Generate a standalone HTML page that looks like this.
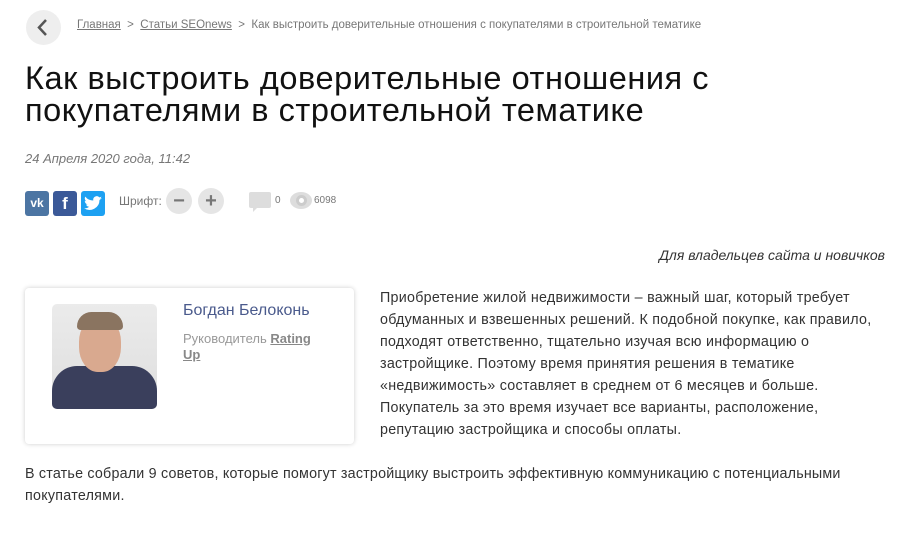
<!DOCTYPE html>
<html><head><meta charset="utf-8"><style>
*{margin:0;padding:0;box-sizing:border-box}
body{width:910px;height:540px;background:#fff;font-family:"Liberation Sans",sans-serif;position:relative;overflow:hidden;color:#222}
.a{position:absolute;white-space:nowrap}
.back{left:26px;top:10px;width:35px;height:35px;border-radius:50%;background:#eee}
.bc{top:19px;font-size:11.5px;color:#777}
.bc u{color:#777}
h1{position:absolute;left:25px;top:62px;font-size:32.5px;font-weight:normal;line-height:32px;color:#111;letter-spacing:0.55px;white-space:nowrap}
.date{left:25px;top:151px;font-size:13px;font-style:italic;color:#777}
.sq{top:191px;width:24px;height:25px;border-radius:3px;color:#fff;font-weight:bold;text-align:center;line-height:25px;font-size:14px}
.circ{top:188px;width:26px;height:26px;border-radius:50%;background:#e5e5e5;color:#777;text-align:center;line-height:26px;font-size:20px;font-weight:bold}
.small{font-size:10px;color:#777}
.p{font-size:14.3px;color:#333;left:380px;letter-spacing:0.26px}
.card{left:25px;top:288px;width:329px;height:156px;border-radius:4px;box-shadow:0 0 5px rgba(0,0,0,.2);background:#fff}
</style></head><body>
<div class="a back"><svg width="35" height="35"><path d="M20 10 L13 17.5 L20 25" stroke="#555" stroke-width="2.5" fill="none"/></svg></div>
<div class="a bc" style="left:77px"><u>Главная</u> &nbsp;&gt;&nbsp; <u>Статьи SEOnews</u> &nbsp;&gt;&nbsp; Как выстроить доверительные отношения с покупателями в строительной тематике</div>
<h1>Как выстроить доверительные отношения с<br>покупателями в строительной тематике</h1>
<div class="a date">24 Апреля 2020 года, 11:42</div>
<div class="a sq" style="left:25px;background:#4c75a3;font-size:12px">vk</div>
<div class="a sq" style="left:53px;background:#3b5998;font-size:17px">f</div>
<div class="a sq" style="left:81px;background:#1da1f2"><svg width="18" height="15" style="margin-top:5px"><path d="M18 2 q-1 .5-2 .6 1-.7 1.5-2-1 .6-2.2.8A3.5 3.5 0 0 0 9.3 4.5 10 10 0 0 1 1.3.6a3.5 3.5 0 0 0 1 4.7 3.5 3.5 0 0 1-1.5-.4 3.5 3.5 0 0 0 2.8 3.4 3.5 3.5 0 0 1-1.6.1 3.5 3.5 0 0 0 3.3 2.4A7 7 0 0 1 0 12.3 10 10 0 0 0 15.5 4Q17 3 18 2z" fill="#fff"/></svg></div>
<div class="a" style="left:119px;top:194px;font-size:12px;color:#777">Шрифт:</div>
<div class="a circ" style="left:166px">−</div>
<div class="a circ" style="left:198px">+</div>
<div class="a" style="left:249px;top:192px;width:22px;height:16px;background:#ddd;border-radius:2px"></div>
<div class="a" style="left:253px;top:207px;width:0;height:0;border-left:5px solid #ddd;border-bottom:5px solid transparent"></div>
<div class="a small" style="left:275px;top:195px">0</div>
<div class="a" style="left:290px;top:192px;width:22px;height:17px;border-radius:50%;background:#ddd"></div>
<div class="a" style="left:296px;top:195px;width:11px;height:11px;border-radius:50%;background:#fff;border:3px solid #ccc"></div>
<div class="a small" style="left:314px;top:195px">6098</div>
<div class="a" style="right:25px;top:247px;font-size:14px;font-style:italic;color:#333">Для владельцев сайта и новичков</div>
<div class="a card"></div>
<div class="a" style="left:52px;top:304px;width:105px;height:105px;border-radius:5px;overflow:hidden;background:linear-gradient(#ebebeb,#dedede)">
<div style="position:absolute;left:0;top:62px;width:105px;height:50px;background:#3a3f5c;border-radius:25px 25px 0 0"></div>
<div style="position:absolute;left:27px;top:13px;width:42px;height:55px;border-radius:45%;background:#d9a98f"></div>
<div style="position:absolute;left:25px;top:8px;width:46px;height:18px;border-radius:20px 20px 5px 5px;background:#8a7460"></div>
</div>
<div class="a" style="left:183px;top:302px;font-size:16px;color:#4a5a8c">Богдан Белоконь</div>
<div class="a" style="left:183px;top:331px;font-size:13px;color:#999;line-height:16px">Руководитель <b style="text-decoration:underline;color:#888">Rating</b><br><b style="text-decoration:underline;color:#888">Up</b></div>
<div class="a p" style="top:290px">Приобретение жилой недвижимости – важный шаг, который требует</div>
<div class="a p" style="top:312px">обдуманных и взвешенных решений. К подобной покупке, как правило,</div>
<div class="a p" style="top:334px">подходят ответственно, тщательно изучая всю информацию о</div>
<div class="a p" style="top:356px">застройщике. Поэтому время принятия решения в тематике</div>
<div class="a p" style="top:378px">«недвижимость» составляет в среднем от 6 месяцев и больше.</div>
<div class="a p" style="top:400px">Покупатель за это время изучает все варианты, расположение,</div>
<div class="a p" style="top:422px">репутацию застройщика и способы оплаты.</div>
<div class="a p" style="left:25px;top:466px;letter-spacing:0.2px">В статье собрали 9 советов, которые помогут застройщику выстроить эффективную коммуникацию с потенциальными</div>
<div class="a p" style="left:25px;top:488px">покупателями.</div>
</body></html>
